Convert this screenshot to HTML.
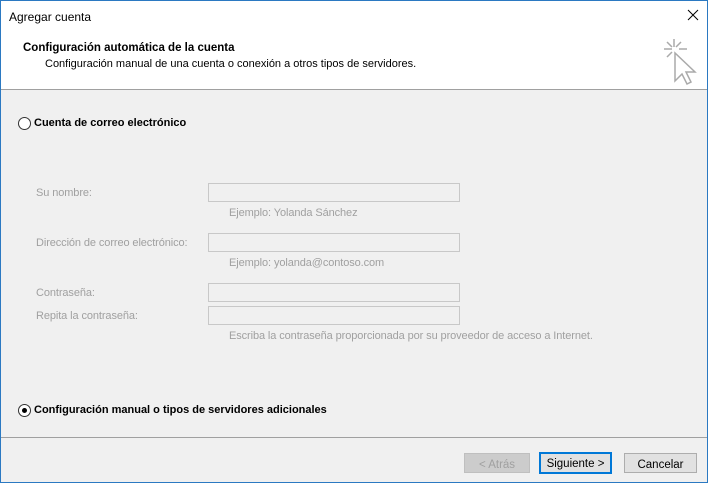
<!DOCTYPE html><html><head><style>
body{margin:0;width:708px;height:483px;overflow:hidden;font-family:"Liberation Sans",sans-serif;font-size:11px;color:#000;}
.win{position:absolute;left:0;top:0;width:706px;height:481px;border:1px solid #2b79c2;background:#f0f0f0;}
.abs{position:absolute;white-space:nowrap;}
.inp{position:absolute;width:250px;height:17px;border:1px solid #c8c8c8;background:#f0f0f0;}
.g{color:#a0a0a0;letter-spacing:-0.1px}
.btn{position:absolute;top:452px;height:20px;border:1px solid #adadad;background:#e1e1e1;text-align:center;line-height:22px;font-size:11.5px;box-sizing:border-box}
.rad{position:absolute;width:11px;height:11px;border:1px solid #333;border-radius:50%;background:#fff;}
</style></head><body><div class="win">
<div class="abs" style="left:0;top:0;width:706px;height:88px;background:#fff;border-bottom:1px solid #a0a0a0"></div>
<div class="abs" style="left:8px;top:9px;font-size:12px">Agregar cuenta</div>
<svg class="abs" style="left:686px;top:8px" width="12" height="12"><path d="M1 1L11 11M11 1L1 11" stroke="#000" stroke-width="1"/></svg>
<div class="abs" style="left:22px;top:41px;font-weight:bold;font-size:11.5px">Configuración automática de la cuenta</div>
<div class="abs" style="left:44px;top:57px;font-size:11px">Configuración manual de una cuenta o conexión a otros tipos de servidores.</div>
<svg class="abs" style="left:658px;top:36px" width="40" height="50"><g stroke="#aaa" stroke-width="1.5" fill="none"><path d="M15 2v8M5 12h8M20 12h8M8 5l5 5M22 5l-5 5M8 20l5-5"/><path d="M16 16l0 28 7-7 5 10 4-2-5-10 9 0z" fill="#fff"/></g></svg>
<div class="rad" style="left:17px;top:116px"></div>
<div class="abs" style="left:33px;top:116px;font-weight:bold">Cuenta de correo electrónico</div>
<div class="abs g" style="left:35px;top:186px">Su nombre:</div>
<div class="inp" style="left:207px;top:182px"></div>
<div class="abs g" style="left:228px;top:206px">Ejemplo: Yolanda Sánchez</div>
<div class="abs g" style="left:35px;top:236px">Dirección de correo electrónico:</div>
<div class="inp" style="left:207px;top:232px"></div>
<div class="abs g" style="left:228px;top:256px">Ejemplo: yolanda@contoso.com</div>
<div class="abs g" style="left:35px;top:286px">Contraseña:</div>
<div class="inp" style="left:207px;top:282px"></div>
<div class="abs g" style="left:35px;top:309px">Repita la contraseña:</div>
<div class="inp" style="left:207px;top:305px"></div>
<div class="abs g" style="left:228px;top:329px">Escriba la contraseña proporcionada por su proveedor de acceso a Internet.</div>
<div class="rad" style="left:17px;top:403px"><div style="position:absolute;left:3px;top:3px;width:5px;height:5px;border-radius:50%;background:#000"></div></div>
<div class="abs" style="left:33px;top:403px;font-weight:bold">Configuración manual o tipos de servidores adicionales</div>
<div class="abs" style="left:0;top:436px;width:706px;border-top:1px solid #a0a0a0"></div>
<div class="btn" style="left:463px;width:66px;color:#a0a0a0;background:#ccc;border-color:#bfbfbf">&lt; Atrás</div>
<div class="btn" style="left:538px;width:73px;border:2px solid #0078d7;top:451px;height:22px;line-height:20px">Siguiente &gt;</div>
<div class="btn" style="left:623px;width:73px">Cancelar</div>
</div></body></html>
